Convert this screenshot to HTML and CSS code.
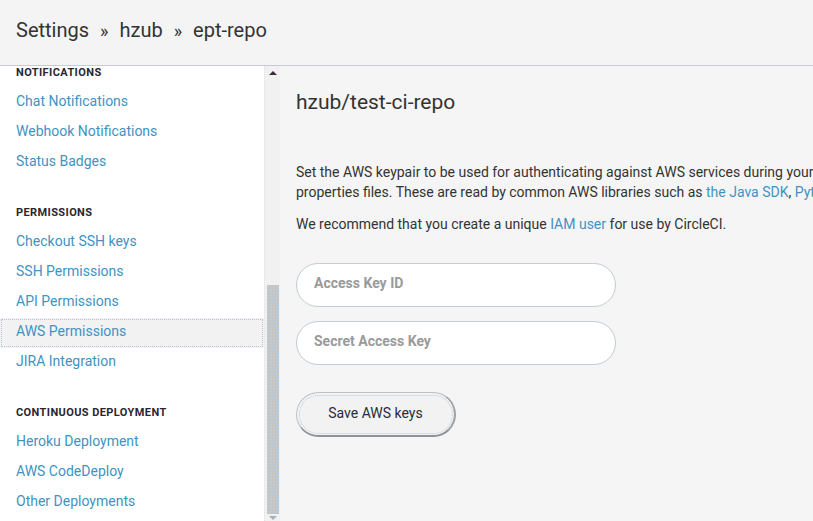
FILE: index.html
```html
<!DOCTYPE html>
<html>
<head>
<meta charset="utf-8">
<link rel="stylesheet" href="styles.css">
</head>
<body>
<header class="topbar">
  <span class="crumb">Settings</span><span class="sep">»</span><span class="crumb">hzub</span><span class="sep">»</span><span class="crumb">ept-repo</span>
</header>
<div class="layout">
  <nav class="sidebar">
    <div class="scroller">
      <section class="group first">
        <h4 class="group-title">NOTIFICATIONS</h4>
        <a class="nav-link">Chat Notifications</a>
        <a class="nav-link">Webhook Notifications</a>
        <a class="nav-link">Status Badges</a>
      </section>
      <section class="group">
        <h4 class="group-title">PERMISSIONS</h4>
        <a class="nav-link">Checkout SSH keys</a>
        <a class="nav-link">SSH Permissions</a>
        <a class="nav-link">API Permissions</a>
        <a class="nav-link active">AWS Permissions</a>
        <a class="nav-link">JIRA Integration</a>
      </section>
      <section class="group">
        <h4 class="group-title">CONTINUOUS DEPLOYMENT</h4>
        <a class="nav-link">Heroku Deployment</a>
        <a class="nav-link">AWS CodeDeploy</a>
        <a class="nav-link">Other Deployments</a>
      </section>
    </div>
  </nav>
  <div class="scrollbar">
    <div class="arrow-up"></div>
    <div class="track"><div class="thumb"></div></div>
    <div class="arrow-down"></div>
  </div>
  <main class="content">
    <h1 class="repo-title">hzub/test-ci-repo</h1>
    <p class="text">Set the AWS keypair to be used for authenticating against AWS services during your builds. Credentials are installed on your containers into the ~/.aws/config and ~/.aws/credentials<br>properties files. These are read by common AWS libraries such as <a class="link">the Java SDK</a>, <a class="link">Python's boto</a>, and <a class="link">the Ruby SDK</a>.</p>
    <p class="text second">We recommend that you create a unique <a class="link">IAM user</a> for use by CircleCI.</p>
    <form class="form">
      <input class="field" type="text" placeholder="Access Key ID">
      <input class="field" type="text" placeholder="Secret Access Key">
      <button class="save-btn" type="button">Save AWS keys</button>
    </form>
  </main>
</div>
</body>
</html>
```

FILE: styles.css
```css
* { box-sizing: border-box; }
html, body {
  margin: 0;
  height: 100%;
  overflow: hidden;
}
body {
  font-family: Roboto, "Liberation Sans", sans-serif;
  color: #333;
  background: #f5f5f5;
}
.topbar {
  height: 66px;
  background: #f4f4f4;
  border-bottom: 1px solid #c6ccd2;
  display: flex;
  align-items: center;
  padding: 0 0 5px 16px;
  font-size: 20px;
  color: #333;
}
.sep {
  margin: 0 11px;
  font-size: 18px;
}
.layout {
  display: flex;
  height: calc(100% - 66px);
}
.sidebar {
  width: 264px;
  flex: 0 0 264px;
  background: #fff;
  overflow: hidden;
}
.scroller {
  margin-top: -8px;
}
.group {
  margin-bottom: 20px;
}
.group-title {
  margin: 0;
  height: 30px;
  line-height: 30px;
  padding-left: 16px;
  font-size: 11px;
  font-weight: 700;
  letter-spacing: 0.4px;
  color: #2b2530;
}
.nav-link {
  display: block;
  height: 30px;
  line-height: 27px;
  padding-left: 16px;
  font-size: 14px;
  color: #3f93c2;
}
.nav-link.active {
  background: #f2f2f2;
  outline: 1px dotted #b9c6d2;
  outline-offset: -2px;
}
.scrollbar {
  width: 16px;
  flex: 0 0 16px;
  background: #f1f1f1;
  border-left: 1px dotted #e2e2e2;
  display: flex;
  flex-direction: column;
  align-items: center;
}
.arrow-up {
  margin-top: 5px;
  width: 0;
  height: 0;
  border-left: 4px solid transparent;
  border-right: 4px solid transparent;
  border-bottom: 4px solid #3b2b3d;
}
.track {
  flex: 1;
  width: 100%;
  display: flex;
  flex-direction: column;
  justify-content: flex-end;
  align-items: center;
  padding-bottom: 2px;
}
.thumb {
  width: 12px;
  height: 229px;
  margin-left: 1px;
  background-color: #bcc7cf;
  background-image: radial-gradient(#e6c9a8 0.7px, transparent 0.8px);
  background-size: 3px 3px;
}
.arrow-down {
  margin-bottom: 1px;
  width: 0;
  height: 0;
  border-left: 4px solid transparent;
  border-right: 4px solid transparent;
  border-top: 4px solid #a9aeb4;
}
.content {
  flex: 1;
  min-width: 0;
  overflow: hidden;
  padding: 22px 0 0 16px;
  background: #f5f5f5;
}
.repo-title {
  margin: 0;
  font-size: 21px;
  line-height: 28px;
  font-weight: 400;
  color: #333;
}
.text {
  margin: 46px 0 0;
  font-size: 14px;
  line-height: 20px;
  white-space: nowrap;
  color: #333;
}
.text.second {
  margin-top: 12px;
}
.link {
  color: #3f93c2;
}
.form {
  margin-top: 29px;
  display: flex;
  flex-direction: column;
  align-items: flex-start;
}
.field {
  width: 320px;
  height: 44px;
  border: 1px solid #c4ccd4;
  border-radius: 22px;
  background: #fff;
  padding: 0 17px 4px;
  font-family: Roboto, "Liberation Sans", sans-serif;
  font-size: 14px;
  font-weight: 700;
  margin-bottom: 14px;
  outline: none;
}
.field::placeholder {
  color: #9a9a9a;
}
.save-btn {
  margin-top: 13px;
  width: 160px;
  height: 45px;
  padding-bottom: 3px;
  border: 1px solid #bcc2c8;
  border-bottom: 2px solid #8b9299;
  border-right: 2px solid #9aa1a8;
  border-radius: 23px;
  background: #f2f2f2;
  font-family: Roboto, "Liberation Sans", sans-serif;
  font-size: 14px;
  color: #2a2a3a;
  outline: 1px dotted #c3c8ce;
  outline-offset: -4px;
}
```
